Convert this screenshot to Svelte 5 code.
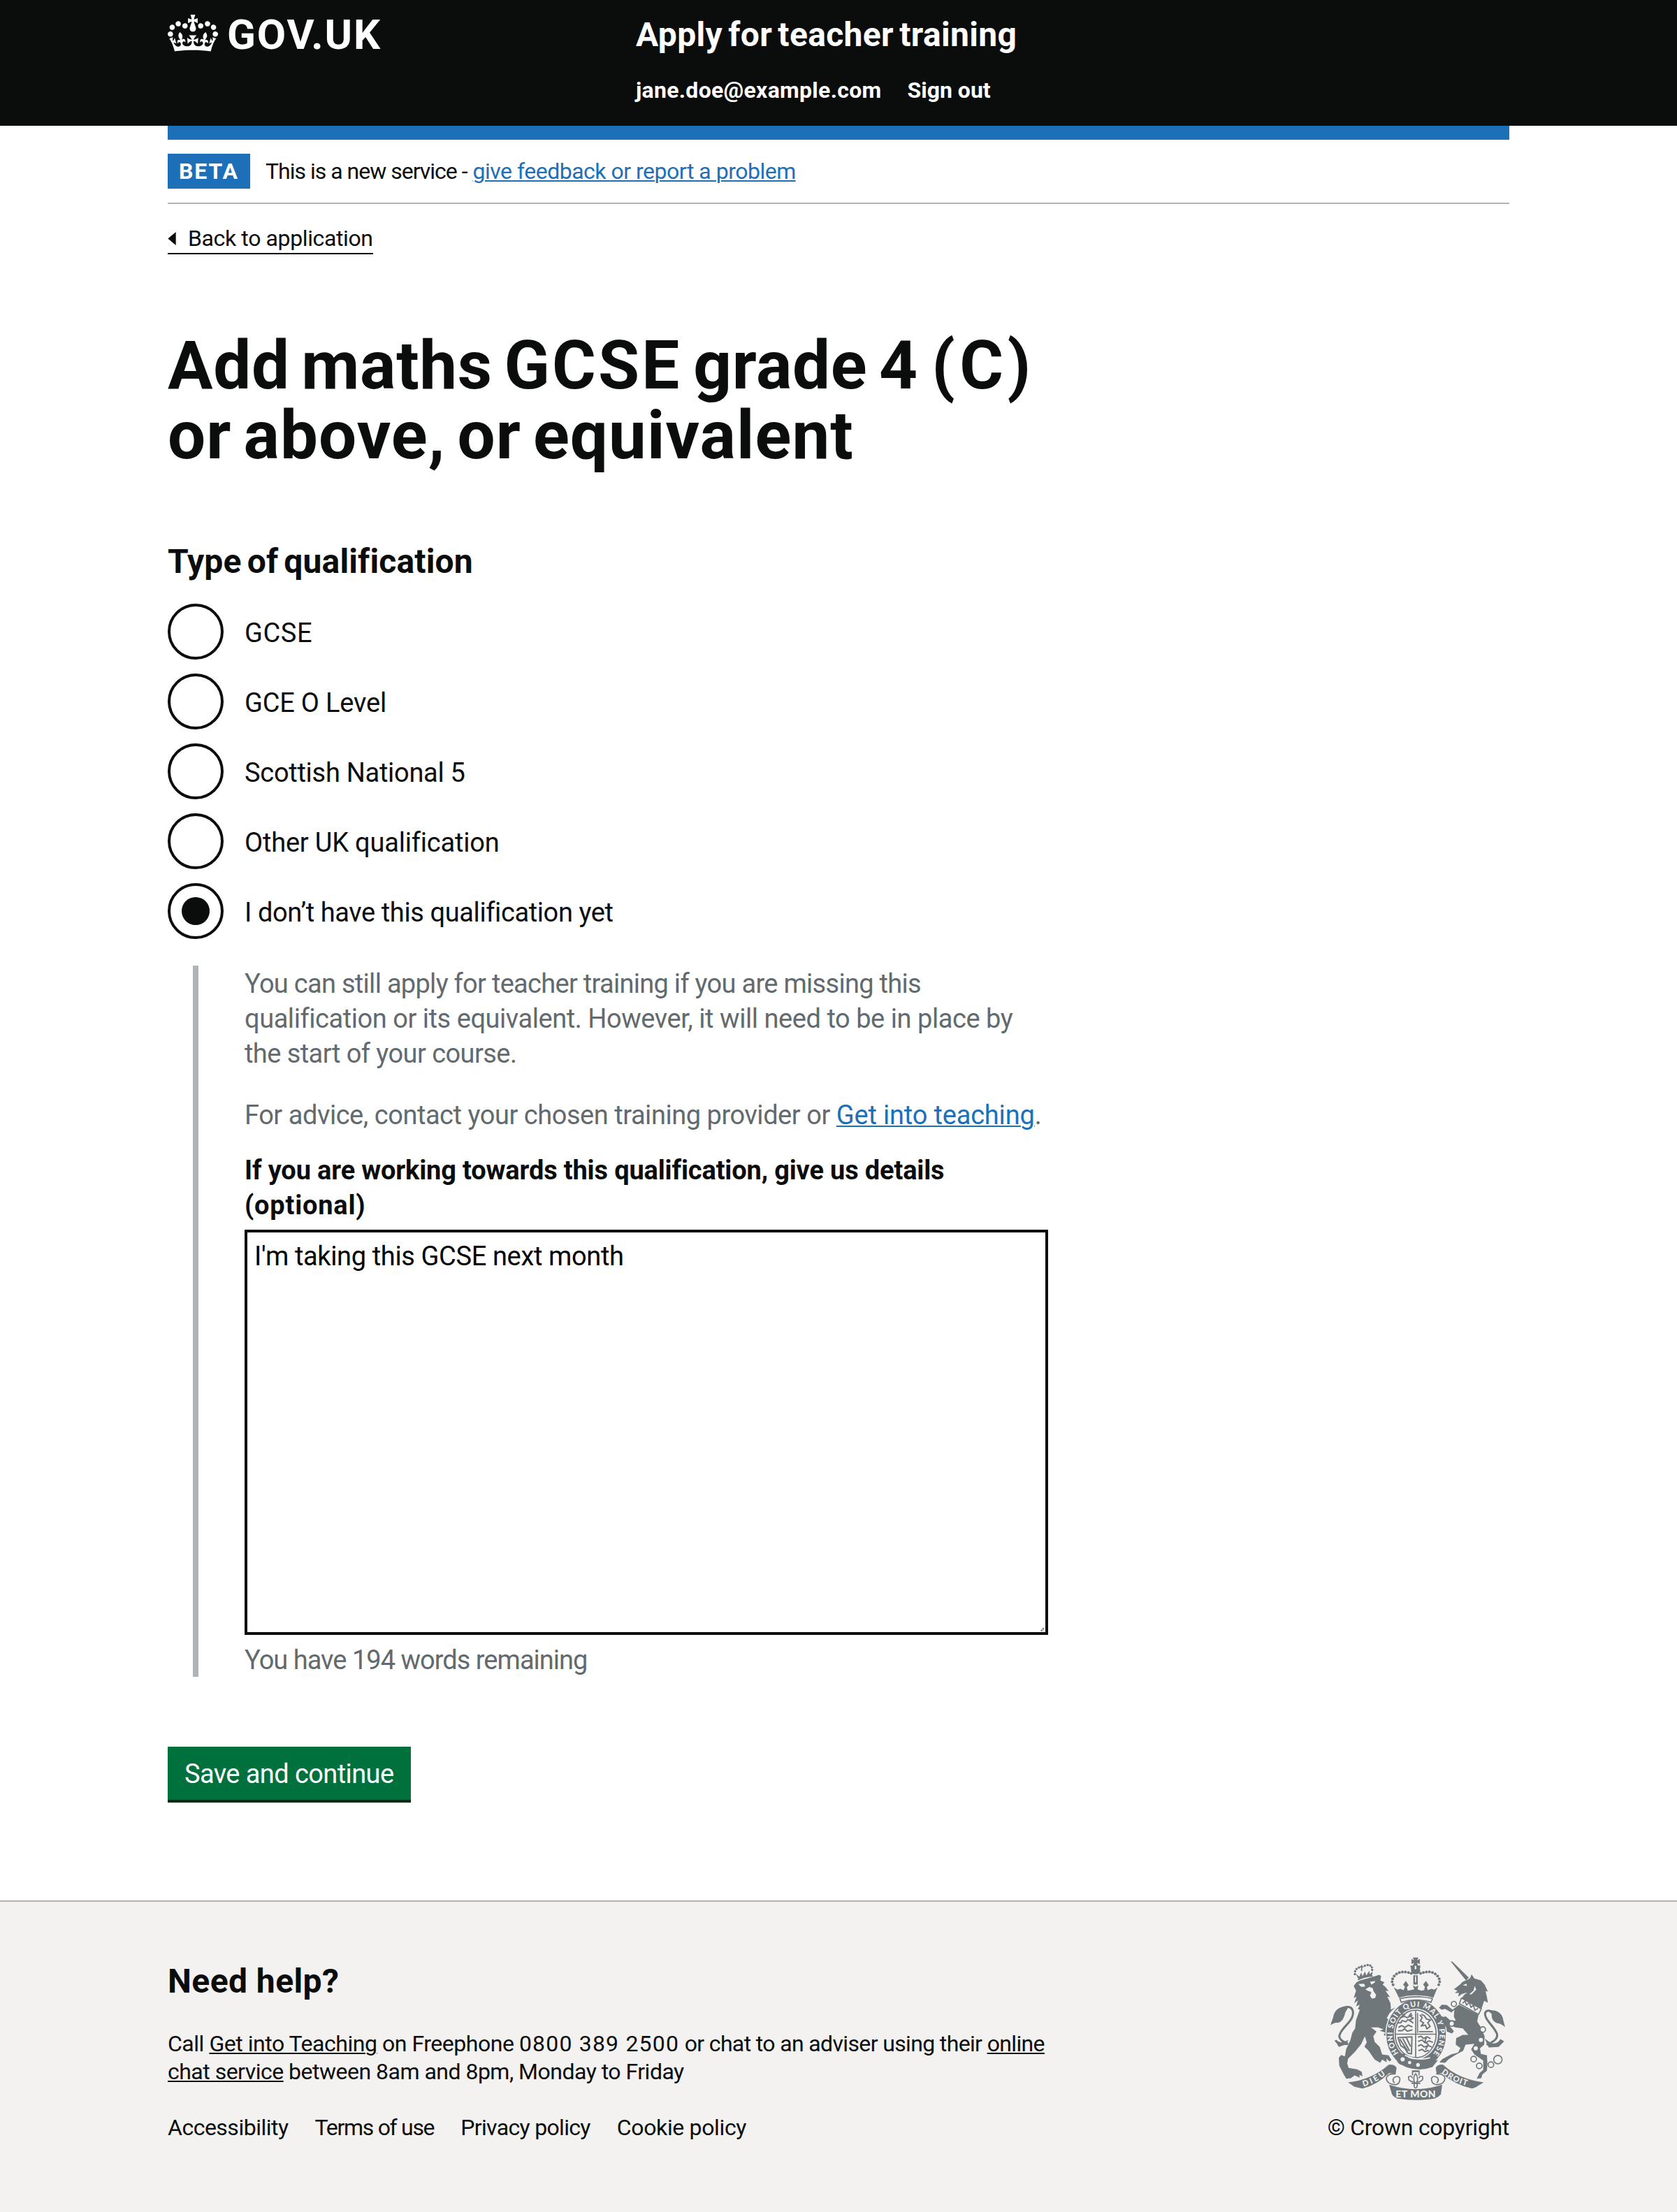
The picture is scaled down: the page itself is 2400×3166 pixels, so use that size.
<script lang="ts">
  const options = [
    { id: 'gcse', label: 'GCSE' },
    { id: 'olevel', label: 'GCE O Level' },
    { id: 'national', label: 'Scottish National 5' },
    { id: 'other', label: 'Other UK qualification' },
    { id: 'missing', label: 'I don’t have this qualification yet' }
  ];
  let selected = $state('missing');
  let details = $state("I'm taking this GCSE next month");

  // Pearls on the two arches of the imperial crown
  const pearls = [
    [341, 183], [337, 170], [339, 157], [346, 145], [356, 136], [368, 130], [381, 128], [394, 128], [407, 130], [419, 134],
    [537, 183], [541, 170], [539, 157], [532, 145], [522, 136], [510, 130], [497, 127], [484, 128], [471, 130], [459, 134]
  ];
  const lionPearls = [[177, 137], [178, 125], [184, 115], [194, 109], [220, 101], [232, 98], [243, 100], [250, 108], [251, 119]];
  const chain = [[602, 265, 11], [593, 349, 12], [726, 375, 12], [687, 502, 12], [711, 531, 12], [761, 526, 12], [791, 504, 18]];
</script>

<div class="page">
  <header class="header">
    <a class="brand" href="#home">
      <svg class="crown" viewBox="0 0 132 97" aria-hidden="true">
        <path fill="#fff" d="M25 30.2c3.5 1.5 7.7-.2 9.1-3.7 1.5-3.6-.2-7.8-3.9-9.2-3.6-1.4-7.6.3-9.1 3.9-1.4 3.5.3 7.5 3.9 9zM9 39.5c3.6 1.5 7.8-.2 9.2-3.7 1.5-3.6-.2-7.8-3.9-9.1-3.6-1.5-7.6.2-9.1 3.8-1.4 3.5.3 7.5 3.8 9zM4.4 57.2c3.5 1.5 7.7-.2 9.1-3.8 1.5-3.6-.2-7.7-3.9-9.1-3.5-1.5-7.6.3-9.1 3.8-1.4 3.5.3 7.6 3.9 9.1zm38.3-21.4c3.5 1.5 7.7-.2 9.1-3.8 1.5-3.6-.2-7.7-3.9-9.1-3.6-1.5-7.6.3-9.1 3.8-1.3 3.6.4 7.7 3.9 9.1zm64.4-5.6c-3.6 1.5-7.8-.2-9.1-3.7-1.5-3.6.2-7.8 3.8-9.2 3.6-1.4 7.7.3 9.2 3.9 1.3 3.5-.4 7.5-3.9 9zm15.9 9.3c-3.6 1.5-7.7-.2-9.1-3.7-1.5-3.6.2-7.8 3.7-9.1 3.6-1.5 7.7.2 9.2 3.8 1.5 3.5-.3 7.5-3.8 9zm4.7 17.7c-3.6 1.5-7.8-.2-9.2-3.8-1.5-3.6.2-7.7 3.9-9.1 3.6-1.5 7.7.3 9.2 3.8 1.3 3.5-.4 7.6-3.9 9.1zM89.3 35.8c-3.6 1.5-7.8-.2-9.2-3.8-1.4-3.6.2-7.7 3.9-9.1 3.6-1.5 7.7.3 9.2 3.8 1.4 3.6-.3 7.7-3.9 9.1zM69.7 17.7l8.9 4.7V9.3l-8.9 2.8c-.2-.3-.5-.6-.9-.9L72.4 0H59.6l3.5 11.2c-.3.3-.6.5-.9.9l-8.8-2.8v13.1l8.8-4.7c.3.3.6.7.9.9l-5 15.4v.1c-.2.8-.4 1.6-.4 2.4 0 4.1 3.1 7.5 7 8.1h.2c.3 0 .7.1 1 .1.4 0 .7 0 1-.1h.2c4-.6 7.1-4.1 7.1-8.1 0-.8-.1-1.7-.4-2.4V34l-5.1-15.4c.4-.2.7-.6 1-.9zM66 92.8c16.9 0 32.8 1.1 47.1 3.2 4-16.9 8.9-26.7 14-33.5l-9.6-3.4c1 4.9 1.1 7.2 0 10.2-1.5-1.4-3-4.3-4.2-8.7L108.6 76c2.8-2 5-3.2 7.5-3.3-4.4 9.4-10 11.9-13.6 11.2-4.3-.8-6.3-4.6-5.6-7.9 1-4.7 5.7-5.9 8-.5 4.3-8.7-3-11.4-7.6-8.8 7.1-7.2 7.9-13.5 2.1-21.1-8 6.1-8.1 12.3-4.5 20.8-4.7-5.4-12.1-2.5-9.5 6.2 3.4-5.2 7.9-2 7.2 3.1-.6 4.3-6.4 7.8-13.5 7.2-10.3-.9-10.9-8-11.2-13.8 2.5-.5 7.1 1.8 11 7.3L80.2 60c-4.1 4.4-8 5.3-12.3 5.4 1.4-4.4 8-11.6 8-11.6H55.5s6.4 7.2 7.9 11.6c-4.2-.1-8-1-12.3-5.4l1.4 16.4c3.9-5.5 8.5-7.7 10.9-7.3-.3 5.8-.9 12.8-11.1 13.8-7.2.6-12.9-2.9-13.5-7.2-.7-5 3.8-8.3 7.1-3.1 2.7-8.7-4.6-11.6-9.4-6.2 3.7-8.5 3.6-14.7-4.6-20.8-5.8 7.6-5 13.9 2.2 21.1-4.7-2.6-11.9.1-7.7 8.8 2.3-5.5 7.1-4.2 8.1.5.7 3.3-1.3 7.1-5.7 7.9-3.5.7-9-1.8-13.5-11.2 2.5.1 4.7 1.3 7.5 3.3l-4.7-15.4c-1.2 4.4-2.7 7.2-4.3 8.7-1.1-3-.9-5.3 0-10.2l-9.5 3.4c5 6.9 9.9 16.7 14 33.5 14.8-2.1 30.8-3.2 47.7-3.2z" />
      </svg>
      <span class="brand-name">GOV.UK</span>
    </a>
    <div class="service">
      <a class="service-name" href="#service">Apply for teacher training</a>
      <nav class="account">
        <a class="email" href="#account">jane.doe@example.com</a>
        <a class="sign-out" href="#sign-out">Sign out</a>
      </nav>
    </div>
  </header>

  <div class="container">
    <div class="accent"></div>
    <div class="phase">
      <strong class="tag">BETA</strong>
      <span class="phase-text">This is a new service -</span>
      <a class="phase-link" href="#feedback">give feedback or report a problem</a>
    </div>
    <a class="back" href="#application">
      <svg class="back-arrow" viewBox="0 0 12 20" aria-hidden="true"><path fill="#0b0c0c" d="M0 10 12 0V20z" /></svg>
      Back to application
    </a>

    <main>
      <h1><span class="h1-first">Add maths <span class="caps">GCSE</span> grade 4 <span class="grade">(C)</span></span> <span class="h1-second">or above, or equivalent</span></h1>
      <form>
        <h2 class="legend">Type of qualification</h2>
        <div class="radios">
          {#each options as option (option.id)}
            <label class="radio">
              <input type="radio" name="qualification" value={option.id} bind:group={selected} />
              <span class="radio-label {option.id}">{option.label}</span>
            </label>
          {/each}
        </div>

        <div class="conditional">
          <p class="hint">
            <span class="row1">You can still apply for teacher training if you are missing this</span>
            <span class="row2">qualification or its equivalent. However, it will need to be in place by</span>
            <span class="row3">the start of your course.</span>
          </p>
          <p class="hint advice"><span class="row4">For advice, contact your chosen training provider or <a href="#teaching">Get into teaching</a>.</span></p>
          <label class="details-label" for="details">
            <span class="row5">If you are working towards this qualification, give us details</span>
            <span class="row6">(optional)</span>
          </label>
          <div class="details">
            <textarea id="details" bind:value={details}></textarea>
            <svg class="grip" viewBox="0 0 5 5" aria-hidden="true"><path fill="#7b7b7b" d="M3 0H5V2L2 5H1V4H0V3H1L3 1z" /><path fill="#c9c9c9" d="M3 2H5V4H4V5H3V4H2V3z" /></svg>
          </div>
          <p class="hint count">You have 194 words remaining</p>
        </div>

        <button type="button">Save and continue</button>
      </form>
    </main>
  </div>

  <footer>
    <div class="footer-main">
      <h2 class="help">Need help?</h2>
      <p class="call">
        <span class="call1">Call <a href="#teaching">Get into Teaching</a> on Freephone <span class="phone">0800 389 2500</span> <span class="tail">or chat to an adviser using their <a href="#chat">online</a></span></span>
        <span class="call2"><a href="#chat">chat service</a> between 8am and 8pm, Monday to Friday</span>
      </p>
      <nav class="links">
        <a class="l1" href="#accessibility">Accessibility</a>
        <a class="l2" href="#terms">Terms of use</a>
        <a class="l3" href="#privacy">Privacy policy</a>
        <a class="l4" href="#cookies">Cookie policy</a>
      </nav>
    </div>
    <div class="copyright">
      <svg class="crest" viewBox="72 64 750 614" aria-hidden="true">
        <defs>
          <path id="garter-arc" d="M365 476A101 119 0 1 1 495 496" />
          <path id="scroll-dieu" d="M214 620Q272 602 318 562" />
          <path id="scroll-droit" d="M548 562Q600 602 666 619" />
        </defs>

        <!-- lion -->
        <path class="ink" d="M172 188L184 172 200 164 244 152 282 140 290 146 286 164 304 172 296 182 308 192 322 210 308 208 328 236 316 234 330 262 332 290 350 280 326 304 314 326 344 352 348 404 340 424 326 414 316 420 312 404 300 398 308 388 284 380 300 374 276 366 246 366 270 384 256 404 262 428 284 450 294 482 322 486 334 506 326 512 312 500 314 516 294 504 286 518 262 504 236 466 218 448 228 430 220 404 204 438 176 472 148 500 144 520 150 540 186 546 206 556 210 576 196 570 198 582 176 572 160 584 140 586 128 566 110 530 108 496 118 484 134 490 140 458 158 420 166 388 178 370 182 334 198 290 190 288 198 268 182 276 190 250 174 262 184 234 172 240 182 208z" />
        <path class="ink" d="M192 158L180 134 196 148 204 130 210 146 220 126 226 142 240 122 240 138 254 126 250 146z" />
        <path class="line thin" d="M190 162Q218 146 254 146M206 98V124M198 106H214" />
        {#each lionPearls as [x, y]}<circle class="ink" cx={x} cy={y} r="5" />{/each}
        <path class="paper" d="M192 180L216 178 222 190 204 192zM242 170L264 166 262 174 248 182zM222 202L240 192 254 198 256 208 268 226 264 240 250 242 242 230 248 214 232 208z" />
        <path class="line" d="M148 436Q108 440 94 422M148 436Q112 424 110 404C114 366 178 340 168 294 162 276 146 276 134 280" />
        <path class="ink" d="M152 276C118 270 88 290 84 322L72 356Q92 344 104 346 128 342 136 302L146 284zM90 420L118 432 150 420 136 440 108 450z" />

        <!-- garter and shield -->
        <ellipse class="ink edge" cx="440" cy="396" rx="130" ry="150" />
        <ellipse class="paper" cx="439" cy="394" rx="95" ry="109" />
        <ellipse class="line thin" cx="438" cy="394" rx="88" ry="102" />
        <path class="line thin" d="M438 294V494M350 395H526M446 390V304M452 384H512" />
        <path class="line shield-mark" d="M362 346H374L380 336 396 342 404 332 418 340M364 366L378 358 392 366 406 356 424 364M370 326L388 318 402 324 424 312M378 310L394 312M362 380H380L390 372 402 382 424 376M420 304L410 316 428 326 412 334 428 348M456 312L466 324 458 338 472 346 462 360 480 356 486 372 500 362 490 346 502 334 484 330 476 316 462 310M448 408L462 404 472 414 486 406 502 414M448 426L466 420 478 432 496 424 512 430M448 446L462 440 474 450 492 444 508 450M450 466L466 460 478 470 494 464M486 404L478 426 492 440 480 462M362 410L422 406 420 480 404 476 392 456 374 444zM382 412L412 468M398 410L416 448M370 416L404 468" />
        <path class="ink" d="M368 482Q440 524 534 506L510 536Q440 562 374 522z" />
        <circle class="line" cx="382" cy="503" r="20" />
        <g class="paper"><circle cx="382" cy="503" r="9" /><circle cx="412" cy="517" r="7" /><circle cx="448" cy="527" r="8" /></g>
        <path class="paper-line" d="M392 486Q450 512 500 496" />
        <text class="motto garter"><textPath href="#garter-arc" textLength="520">HONI SOIT QUI MAL Y PENSE</textPath></text>

        <!-- unicorn -->
        <path class="ink" d="M588 82L596 84 666 152 654 164zM602 202L628 182 640 170 662 160 672 154 678 138 690 156 718 164 734 182 748 212 738 210 744 236 748 260 732 252 720 288 636 240 646 226 660 216 638 222 620 234 624 218 606 218 618 208z" />
        <path class="paper" d="M640 184L656 178 658 188zM692 188L686 208 668 224 678 224 698 204z" />
        <path class="line thin" d="M634 240L720 286 708 310 626 264zM640 262L650 252 656 270 668 258 676 280 686 270 692 292 706 284" />
        <path class="ink" d="M624 268L708 312 702 340 718 366 734 404 732 440 714 456 718 480 744 486 746 520 744 552 724 568 720 584 700 586 712 562 728 548 728 508 690 482 676 460 690 436 652 440 642 466 606 486 580 502 564 518 540 516 552 502 590 482 620 474 630 454 610 440 612 412 640 398 664 398 640 370 608 366 578 352 552 328 566 318 592 340 610 336 602 320 604 290 592 302 564 286 550 290 538 282 550 268 572 270 596 290zM544 318L568 322 588 340 600 336 578 352 602 382 594 392 572 384 570 368 556 348z" />
        <g class="paper"><circle cx="718" cy="420" r="9" /><circle cx="696" cy="456" r="9" /><circle cx="593" cy="349" r="9" /><circle cx="726" cy="375" r="9" /></g>
        {#each chain as [x, y, r]}<circle class="line thin" cx={x} cy={y} {r} />{/each}
        <path class="line" d="M742 438Q784 446 802 426M760 432Q790 418 788 396C776 360 732 334 736 304 742 290 756 292 764 298" />
        <path class="ink" d="M748 294C784 286 812 306 814 334L822 364Q800 348 788 348 762 338 764 308zM802 416L818 426 794 450 752 452 734 414 760 432 784 440z" />

        <!-- imperial crown -->
        <path class="ink" d="M426 66H450L444 78 456 72V94L444 88 448 100H458V110H416V100H426L431 88 420 94V72L431 78zM418 106H456V118H458Q458 138 438 138 418 138 418 118zM428 142H447V182H428z" />
        <path class="paper" d="M434 102H441V116H434zM435 146H440V172H435z" />
        {#each pearls as [x, y]}<circle class="ink" cx={x} cy={y} r="6" />{/each}
        <path class="ink" d="M344 194L360 204 372 200 386 206 392 192 384 182 396 166 408 184 400 194 404 208 416 206 432 202 426 186 438 192 450 186 446 202 462 208 474 206 478 192 470 182 482 166 494 184 486 194 490 206 506 200 518 204 532 194 514 238Q438 218 366 238z" />
        <path class="line thin base" d="M370 242Q438 226 510 242L504 258Q438 238 376 258z" />

        <!-- scrolls and fleur-de-lis -->
        <path class="ink" d="M148 602Q250 590 322 526 350 524 356 540L352 566 324 562Q270 614 210 628 186 624 174 620zM730 602Q620 586 556 526 530 524 524 540L528 566 548 562Q610 614 680 628 700 622 706 616zM324 612Q436 650 552 612L546 654Q536 666 518 672 440 684 360 672 340 662 336 652z" />
        <path class="line thin" d="M352 566Q316 564 312 584 314 610 352 612 372 608 370 584 362 570 344 582 336 596 348 604M526 566Q560 564 564 584 562 610 528 612 504 608 506 584 514 570 532 582 540 596 528 604" />
        <path class="ink" d="M422 550H455V572H450V558H427V572H422z" />
        <path class="line thin" d="M438 564Q424 582 434 604H442Q452 582 438 564M430 600Q404 598 408 578 420 570 424 584M446 600Q472 598 468 578 456 570 452 584M420 606H458M432 608Q430 626 438 626 446 626 444 608" />
        <text class="motto"><textPath href="#scroll-dieu" textLength="108">DIEU</textPath></text>
        <text class="motto"><textPath href="#scroll-droit" textLength="122">DROIT</textPath></text>
        <text class="motto big" x="352" y="667" textLength="172">ET MON</text>
      </svg>
      <a class="crown-copy" href="#copyright">© Crown copyright</a>
    </div>
  </footer>
</div>

<style>
  :global(body) { background: #fff; }
  .page { width: 2400px; height: 3166px; display: flex; flex-direction: column; font-family: Roboto, "Liberation Sans", sans-serif; color: #0b0c0c; font-size: 38px; line-height: 50px; white-space: nowrap; }
  h1, h2, p { margin: 0; }
  a { color: inherit; text-decoration: none; }
  h1 > span, p > span, .details-label span { display: block; }

  .header { height: 180px; box-sizing: border-box; padding: 20px 240px 0; background: #0b0c0c; color: #fff; display: grid; grid-template-columns: 670px auto; justify-content: start; font-weight: 700; }
  .brand { display: flex; align-items: flex-start; gap: 13px; }
  .crown { width: 72px; height: 53px; margin-top: 1px; }
  .brand-name { font-size: 60px; line-height: 60px; letter-spacing: 1.9px; }
  .service-name { display: block; font-size: 48px; line-height: 60px; letter-spacing: 0.33px; word-spacing: -4px; }
  .account { display: flex; gap: 37px; margin-top: 29px; font-size: 32px; line-height: 40px; }
  .email { letter-spacing: 0.28px; }

  .container { width: 1920px; margin: 0 240px; }
  .accent { height: 20px; background: #1d70b8; }
  .phase { display: flex; padding: 20px 0; border-bottom: 2px solid #b1b4b6; font-size: 32px; line-height: 50px; }
  .tag { width: 118px; box-sizing: border-box; padding-left: 16px; background: #1d70b8; color: #fff; letter-spacing: 1.87px; }
  .phase-text { margin-left: 22px; letter-spacing: -1px; }
  .phase-link { margin-left: 8px; letter-spacing: -0.5px; }
  .phase-link, .hint a, .call a { text-decoration: underline; text-decoration-thickness: 2px; text-underline-offset: 2px; }
  .phase-link, .hint a { color: #1d70b8; }
  .back { display: flex; align-items: center; gap: 17px; width: 294px; margin-top: 29px; border-bottom: 2px solid #0b0c0c; font-size: 32px; line-height: 41px; letter-spacing: -0.38px; }
  .back-arrow { width: 12px; height: 19px; }

  h1 { margin-top: 109px; font-size: 96px; line-height: 100px; font-weight: 700; }
  .h1-first { letter-spacing: 0.7px; word-spacing: -8px; }
  .h1-second { letter-spacing: 1.1px; word-spacing: -8px; }
  .caps { letter-spacing: 3.2px; }
  .grade { margin-left: 3px; letter-spacing: 6.5px; }
  .legend, .help { font-size: 48px; line-height: 60px; font-weight: 700; }
  .legend { margin-top: 101px; letter-spacing: 0.15px; word-spacing: -4px; }
  .radios { margin-top: 30px; display: flex; flex-direction: column; gap: 20px; }
  .radio { display: flex; height: 80px; align-items: center; gap: 30px; }
  .radio input { appearance: none; width: 80px; height: 80px; margin: 0; box-sizing: border-box; border: 4px solid #0b0c0c; border-radius: 50%; display: grid; place-items: center; }
  .radio input:checked::before { content: ""; width: 40px; height: 40px; border-radius: 50%; background: #0b0c0c; }
  .radio-label { padding-top: 4px; letter-spacing: -0.2px; }
  .gcse { letter-spacing: 0.6px; }
  .national { letter-spacing: -0.28px; }
  .missing { letter-spacing: -0.39px; }

  .conditional { box-sizing: border-box; height: 1018px; margin: 38px 0 0 36px; padding: 1px 0 0 66px; border-left: 8px solid #b1b4b6; }
  .hint { color: #626a6e; }
  .advice { margin-top: 38px; }
  .row1 { letter-spacing: -0.71px; }
  .row2 { letter-spacing: -0.45px; }
  .row3 { letter-spacing: -0.56px; }
  .row4 { letter-spacing: -0.46px; }
  .row4 a { letter-spacing: -0.18px; }
  .details-label { display: block; margin-top: 29px; font-weight: 700; }
  .row5 { letter-spacing: -0.16px; }
  .row6 { letter-spacing: 0.8px; }
  .details { position: relative; width: 1150px; height: 580px; margin-top: 10px; }
  textarea { display: block; width: 100%; height: 100%; box-sizing: border-box; margin: 0; padding: 9px 10px; border: 4px solid #0b0c0c; border-radius: 0; resize: none; outline: 0; background: #fff; color: #000; font: 38px/50px Roboto, "Liberation Sans", sans-serif; letter-spacing: -0.36px; }
  .grip { position: absolute; right: 6px; bottom: 5px; width: 5px; height: 5px; }
  .count { margin-top: 11px; letter-spacing: -0.98px; }
  button { display: block; width: 348px; height: 76px; margin: 100px 0 0; padding: 2px 24px 0; border: 0; background: #00703c; box-shadow: 0 4px 0 #002d18; color: #fff; font: 38px/50px Roboto, "Liberation Sans", sans-serif; letter-spacing: -0.59px; text-align: left; }

  footer { margin-top: 144px; flex: 1; box-sizing: border-box; padding: 0 240px; border-top: 2px solid #b1b4b6; background: #f3f2f1; display: flex; justify-content: space-between; font-size: 32px; line-height: 40px; }
  .footer-main { padding-top: 84px; }
  .help { letter-spacing: 0.43px; }
  .call { margin-top: 39px; }
  .call1 { letter-spacing: -0.47px; }
  .phone { letter-spacing: 1.2px; }
  .tail { letter-spacing: -0.64px; }
  .call2 { letter-spacing: -0.51px; }
  .links { display: flex; gap: 38px; margin-top: 40px; }
  .l1 { letter-spacing: -0.5px; }
  .l2 { letter-spacing: -1.3px; }
  .l3 { letter-spacing: -0.68px; }
  .l4 { letter-spacing: -0.35px; }
  .copyright { display: flex; flex-direction: column; align-items: flex-end; padding-top: 79px; }
  .crest { width: 250px; height: 205px; margin-right: 6px; }
  .crown-copy { margin-top: 19px; letter-spacing: -0.28px; }
  .ink { fill: #6f777b; }
  .edge { stroke: #f3f2f1; stroke-width: 4; }
  .paper { fill: #f3f2f1; }
  .line { fill: none; stroke: #6f777b; stroke-width: 9; stroke-linejoin: round; }
  .thin { stroke-width: 5; }
  .base { fill: #f3f2f1; }
  .shield-mark { stroke-width: 6; }
  .paper-line { fill: none; stroke: #f3f2f1; stroke-width: 5; }
  .motto { fill: #f3f2f1; font: 900 34px Lato, sans-serif; }
  .garter { font-size: 32px; }
  .big { font-size: 42px; }
</style>
